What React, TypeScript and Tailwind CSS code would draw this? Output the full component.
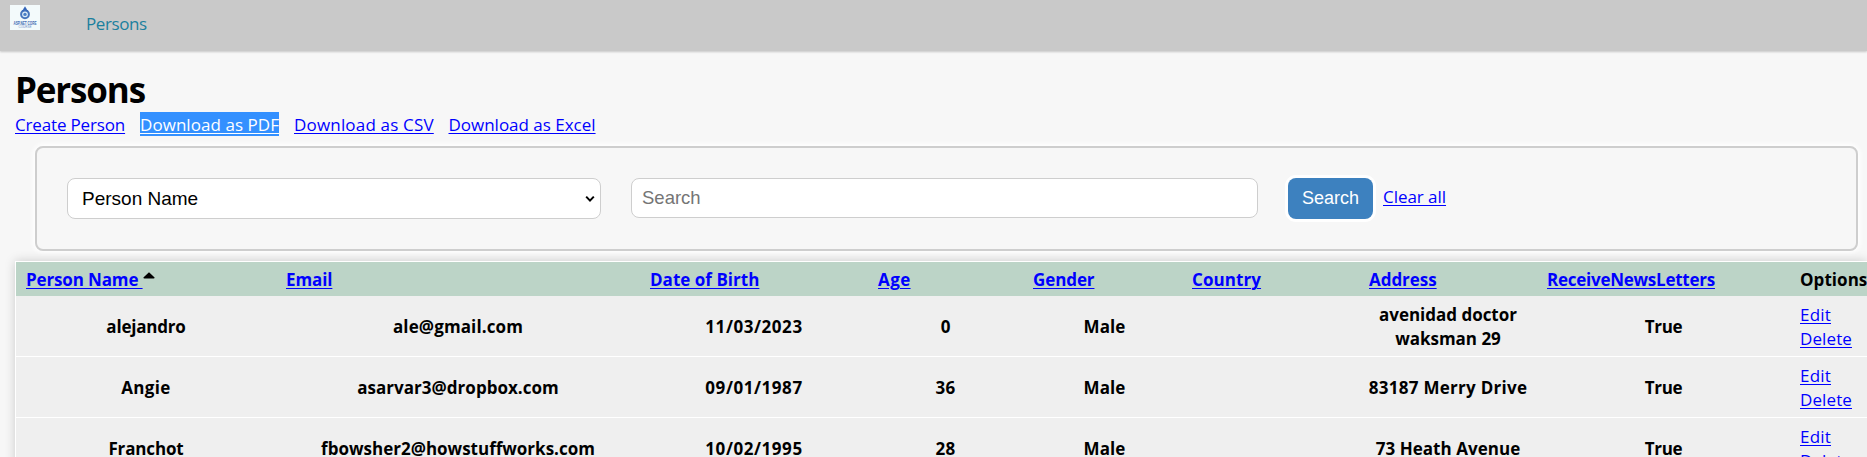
import { ReactNode } from "react";

type Cell = { text: string; track: string };

const link = "text-[#0000ff] underline decoration-1 underline-offset-2";

const grid =
  "grid grid-cols-[260px_364px_228px_155px_159px_177px_178px_253px_90px] min-w-max";

const headings: Cell[] = [
  { text: "Person Name", track: "tracking-[-0.14px]" },
  { text: "Email", track: "tracking-[-0.1px]" },
  { text: "Date of Birth", track: "tracking-[0.02px]" },
  { text: "Age", track: "tracking-[0.4px]" },
  { text: "Gender", track: "tracking-[-0.1px]" },
  { text: "Country", track: "tracking-[0.08px]" },
  { text: "Address", track: "tracking-[-0.04px]" },
  { text: "ReceiveNewsLetters", track: "tracking-[-0.25px]" },
];

const rows: Cell[][] = [
  [
    { text: "alejandro", track: "tracking-[-0.2px]" },
    { text: "ale@gmail.com", track: "tracking-[0.12px]" },
    { text: "11/03/2023", track: "tracking-[0.55px]" },
    { text: "0", track: "" },
    { text: "Male", track: "tracking-[0.1px] pl-3" },
    { text: "", track: "" },
    { text: "avenidad doctor waksman 29", track: "tracking-[-0.02px]" },
    { text: "True", track: "tracking-[-0.35px]" },
  ],
  [
    { text: "Angie", track: "tracking-[0.35px]" },
    { text: "asarvar3@dropbox.com", track: "tracking-[0.03px]" },
    { text: "09/01/1987", track: "tracking-[0.55px]" },
    { text: "36", track: "tracking-[0.3px]" },
    { text: "Male", track: "tracking-[0.1px] pl-3" },
    { text: "", track: "" },
    { text: "83187 Merry Drive", track: "tracking-[0.27px] whitespace-nowrap" },
    { text: "True", track: "tracking-[-0.35px]" },
  ],
  [
    { text: "Franchot", track: "tracking-[-0.15px]" },
    { text: "fbowsher2@howstuffworks.com", track: "tracking-[0px]" },
    { text: "10/02/1995", track: "tracking-[0.55px]" },
    { text: "28", track: "tracking-[0.3px]" },
    { text: "Male", track: "tracking-[0.1px] pl-3" },
    { text: "", track: "" },
    { text: "73 Heath Avenue", track: "tracking-[0.05px] whitespace-nowrap" },
    { text: "True", track: "tracking-[-0.35px]" },
  ],
];

function Logo() {
  return (
    <svg width="30" height="25" viewBox="0 0 30 25" className="block">
      <rect width="30" height="25" fill="#f3fafb" />
      <path d="M15 1.2 L17 4.6 H13 Z" fill="#3565b8" />
      <circle cx="15" cy="9.3" r="3.9" fill="#dcecf6" stroke="#4675bd" strokeWidth="2" />
      <circle cx="15" cy="9.4" r="1.7" fill="#4a7fc6" />
      <path d="M12.2 6.2 L15 3.8 L17.8 6.2" fill="none" stroke="#3565b8" strokeWidth="1.2" />
      <text
        x="15"
        y="20"
        textAnchor="middle"
        fontFamily="Liberation Sans, sans-serif"
        fontWeight="bold"
        fontSize="5"
        textLength="23"
        lengthAdjust="spacingAndGlyphs"
        fill="#3f68b2"
      >
        ASP.NET CORE
      </text>
      <text
        x="15"
        y="23"
        textAnchor="middle"
        fontFamily="Liberation Sans, sans-serif"
        fontSize="2.6"
        textLength="13"
        lengthAdjust="spacingAndGlyphs"
        fill="#6d8fc8"
      >
        COURSE
      </text>
    </svg>
  );
}

function A({ track, children }: { track: string; children: ReactNode }) {
  return (
    <a href="#" className={`${link} ${track}`}>
      {children}
    </a>
  );
}

export default function App() {
  return (
    <div className="h-[457px] overflow-hidden bg-[#f7f7f7] font-['Open_Sans',sans-serif] text-[17px] leading-6 text-black">
      <header className="flex h-[51px] items-start bg-[#c9c9c9] pt-[5px] pl-2.5 shadow-[0_1px_2px_rgba(0,0,0,0.2)]">
        <Logo />
        <a href="#" className="mt-[7px] ml-[46px] tracking-[-0.4px] text-[#1b809e]">
          Persons
        </a>
      </header>

      <main className="pt-[15px] pl-[15px]">
        <h1 className="h-[46px] text-[35px] leading-[48px] font-bold tracking-[-1.15px]">Persons</h1>
        <nav className="flex h-6 gap-[15px] leading-[25px] whitespace-nowrap">
          <div className="w-[110px]">
            <A track="tracking-[-0.16px]">Create Person</A>
          </div>
          <div className="w-[139px] bg-[#3390ff]">
            <a href="#" className="tracking-[0.05px] text-white underline decoration-1 underline-offset-2">
              Download as PDF
            </a>
          </div>
          <div className="w-[139.5px]">
            <A track="tracking-[0.18px]">Download as CSV</A>
          </div>
          <A track="tracking-[-0.01px]">Download as Excel</A>
        </nav>

        <section className="mt-2.5 mr-[9px] ml-5 flex h-[105px] items-start rounded-lg border-2 border-[#cecece] pt-[30px] pl-[30px] shadow-[0_0_5px_2px_#fff]">
          <button
            type="button"
            className="flex h-[41px] w-[534px] items-center justify-between rounded-lg border border-[#cecece] bg-white pr-[5px] pl-3.5 font-['Liberation_Sans',Arial,sans-serif] text-[19px]"
          >
            <span>Person Name</span>
            <svg width="10" height="8" viewBox="0 0 10 8">
              <path d="M1.2 1.6 L5 5.6 L8.8 1.6" fill="none" stroke="#000" strokeWidth="2" />
            </svg>
          </button>
          <input
            placeholder="Search"
            className="ml-[30px] h-10 w-[627px] rounded-lg border border-[#cecece] bg-white px-[10px] font-['Liberation_Sans',Arial,sans-serif] text-[18.5px] placeholder:text-[#757575]"
          />
          <button
            type="button"
            className="ml-[30px] h-[41px] w-[85px] rounded-lg bg-[#3d81bf] pb-0.5 font-['Liberation_Sans',Arial,sans-serif] text-[18px] text-white shadow-[0_0_0_3px_#fff]"
          >
            Search
          </button>
          <div className="mt-[7px] ml-2.5">
            <A track="tracking-[-0.04px]">Clear all</A>
          </div>
        </section>

        <div className="mt-2.5 border-t border-l border-white font-bold shadow-[0_0_10px_rgba(0,0,0,0.18)]">
          <div className={`${grid} h-[34px] items-center bg-[#bcd4c7] pt-0.5`}>
            {headings.map((h, i) => (
              <div key={h.text} className="flex pl-2.5 whitespace-pre">
                <A track={h.track}>{i === 0 ? h.text + " " : h.text}</A>
                {i === 0 && (
                  <svg width="12" height="7" viewBox="0 0 12 7" className="mt-[4px]">
                    <path d="M6 0.2 L11.6 5.6 Q11.6 6.6 10.6 6.6 H1.4 Q0.4 6.6 0.4 5.6 Z" fill="#000" />
                  </svg>
                )}
              </div>
            ))}
            <div className="pl-2.5 tracking-[0.05px]">Options</div>
          </div>
          {rows.map((r) => (
            <div key={r[0].text} className={`${grid} h-[61px] items-center border-b border-white bg-[#efefef] pt-px`}>
              {r.map((c, i) => (
                <div key={i} className={`px-2 text-center ${c.track}`}>
                  {c.text}
                </div>
              ))}
              <div className="flex flex-col items-start pl-2.5 font-normal">
                <A track="tracking-[0.2px]">Edit</A>
                <A track="tracking-[0.11px]">Delete</A>
              </div>
            </div>
          ))}
        </div>
      </main>
    </div>
  );
}
